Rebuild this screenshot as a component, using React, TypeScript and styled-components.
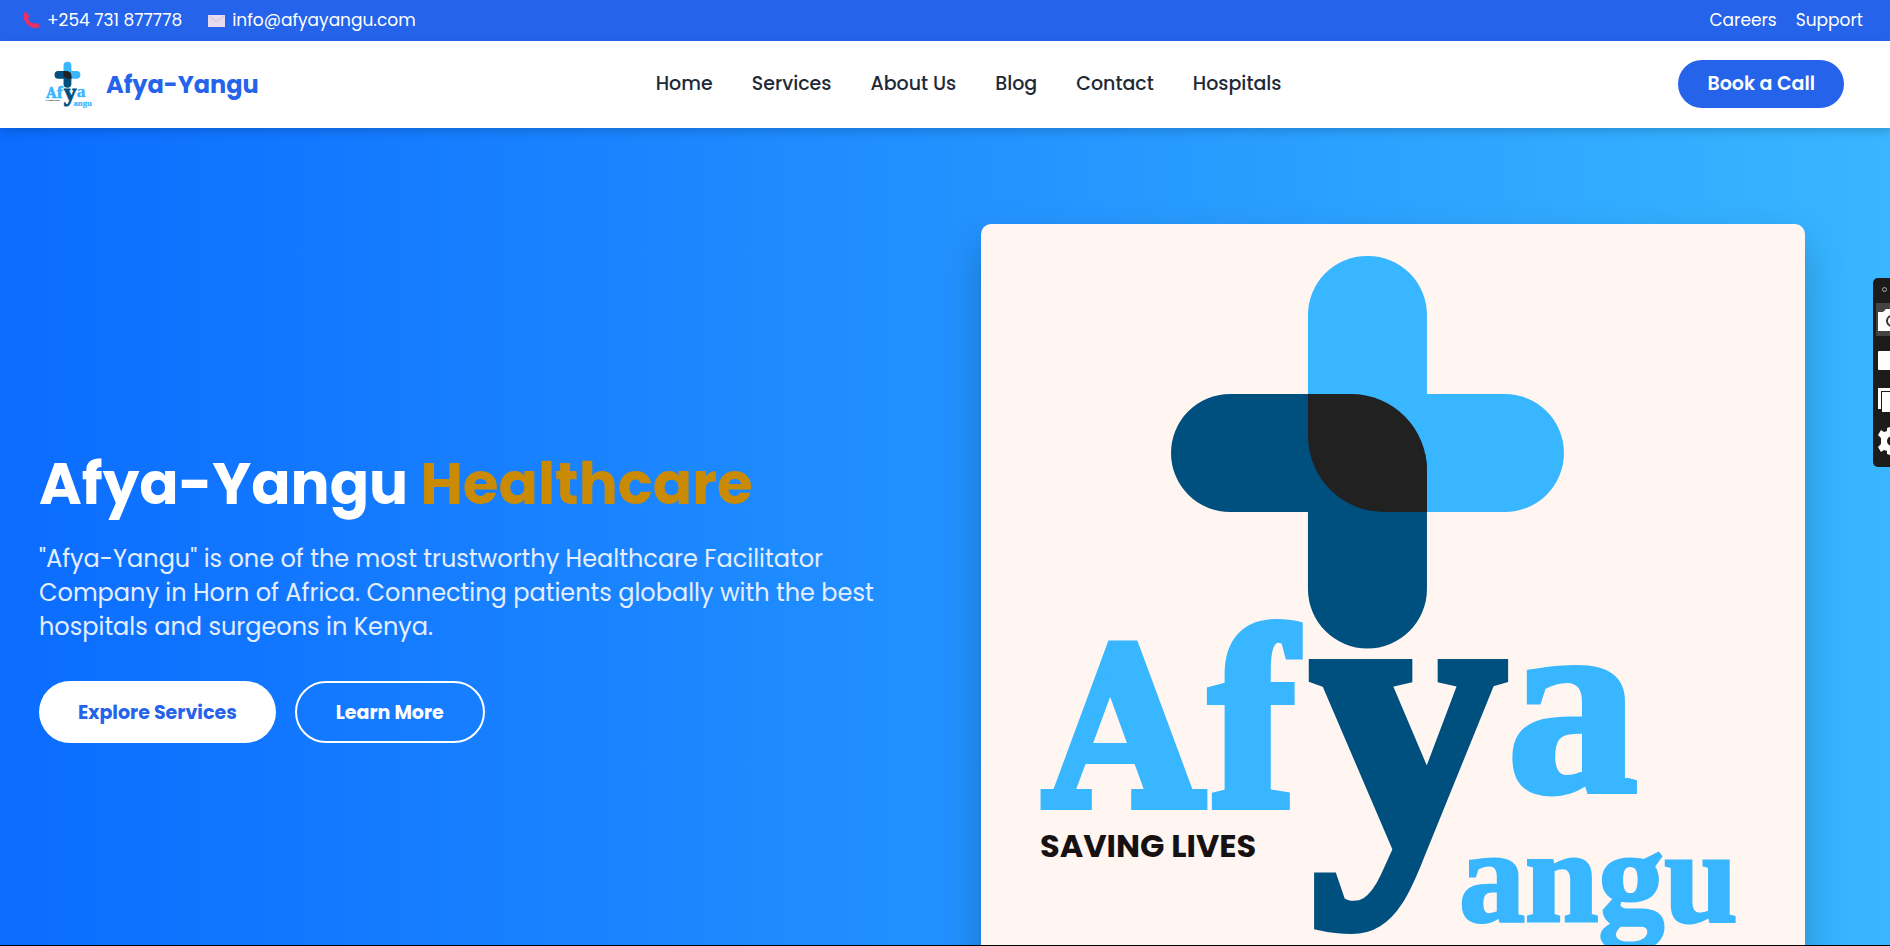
import React from "react";
import styled, { createGlobalStyle } from "styled-components";

const sans = `Poppins, Inter, "Open Sans", sans-serif`;
const slab = `"DejaVu Serif Condensed", "DejaVu Serif", serif`;
const display = `"Liberation Serif", "Times New Roman", serif`;

const GlobalStyle = createGlobalStyle`
  *, *::before, *::after { box-sizing: border-box; }
  body { margin: 0; font-family: ${sans}; color: #1f2937; }
`;

const Page = styled.div`
  height: 100vh;
  display: flex;
  flex-direction: column;
  overflow: hidden;
  border-bottom: 1px solid #000;
`;

const TopBar = styled.div`
  flex: none;
  display: flex;
  justify-content: space-between;
  padding: 8px 27px 8px 23px;
  background: #2563eb;
  font-size: 17px;
  line-height: 25px;
`;

const TopGroup = styled.div<{ $gap: number }>`
  display: flex;
  align-items: center;
  gap: ${(p) => p.$gap}px;
`;

const TopLink = styled.a`
  display: inline-flex;
  align-items: center;
  gap: 7px;
  color: #fff;
  text-decoration: none;
`;

const Header = styled.header`
  flex: none;
  position: relative;
  z-index: 1;
  display: flex;
  align-items: center;
  justify-content: space-between;
  height: 87px;
  padding: 0 46px 2px 45px;
  background: #fff;
  box-shadow: 0 4px 8px rgba(0, 0, 0, 0.15);
`;

const Brand = styled.a`
  display: flex;
  align-items: center;
  gap: 13px;
  padding-top: 2px;
  color: #2563eb;
  font-size: 24px;
  font-weight: 700;
  line-height: 36px;
  text-decoration: none;
`;

const BrandMark = styled.span`
  width: 48px;
  height: 48px;
`;

const Nav = styled.nav`
  display: flex;
  gap: 39px;
`;

const NavLink = styled.a`
  color: #1f2937;
  font-size: 19px;
  font-weight: 500;
  line-height: 28px;
  text-decoration: none;
`;

const CallButton = styled.button`
  height: 48px;
  padding: 0 29px;
  border: 0;
  border-radius: 24px;
  background: #2563eb;
  color: #fff;
  font-family: inherit;
  font-size: 19px;
  font-weight: 600;
`;

const Hero = styled.main`
  flex: 1;
  min-height: 0;
  display: grid;
  grid-template-columns: 21fr 20fr;
  gap: 77px;
  padding: 96px 85px 0 39px;
  overflow: hidden;
  background: linear-gradient(90deg, #0b6cff 0%, #38b6ff 100%);
`;

const Copy = styled.section`
  padding-top: 221px;
`;

const Title = styled.h1`
  margin: 0;
  color: #fff;
  font-size: 58px;
  font-weight: 700;
  line-height: 77px;
  white-space: nowrap;
`;

const Accent = styled.span`
  color: #ca8a04;
`;

const Lead = styled.p`
  margin: 20px 0 37px;
  color: #e4eefe;
  font-size: 24px;
  line-height: 34px;
`;

const Actions = styled.div`
  display: flex;
  gap: 19px;
`;

const ActionButton = styled.button<{ $outline?: boolean }>`
  height: 62px;
  padding: 0 39px;
  border: ${(p) => (p.$outline ? "2px solid #fff" : "0")};
  border-radius: 31px;
  background: ${(p) => (p.$outline ? "transparent" : "#fff")};
  color: ${(p) => (p.$outline ? "#fff" : "#2563eb")};
  font-family: inherit;
  font-size: 19px;
  font-weight: 700;
`;

const LogoCard = styled.figure`
  align-self: start;
  margin: 0;
  aspect-ratio: 1;
  border-radius: 10px;
  overflow: hidden;
  background: #fff6f1;
  box-shadow: 0 20px 40px rgba(0, 0, 0, 0.22);
`;

const LogoSvg = styled.svg`
  display: block;
  width: 100%;
  height: 100%;
`;

const Recorder = styled.aside`
  position: fixed;
  top: 278px;
  right: 0;
  z-index: 2;
  width: 17px;
  height: 189px;
  border-radius: 5px 0 0 5px;
  background: #1c1c1c;
  overflow: hidden;
`;

function Logo({ viewBox }: { viewBox: string }) {
  return (
    <LogoSvg viewBox={viewBox} role="img" aria-label="Afya-Yangu, saving lives">
      <g fill="#38b6ff">
        <rect x="327" y="32" width="119" height="256" rx="59" />
        <rect x="327" y="170" width="256" height="118" rx="59" />
      </g>
      <g fill="#00507f">
        <path d="M249 170H370V288H249A59 59 0 0 1 249 170Z" />
        <path d="M327 230H446V365A59 59 0 0 1 327 365Z" />
      </g>
      <path d="M370 170A76 76 0 0 1 446 246V170Z" fill="#38b6ff" />
      <path d="M327 170H370A76 76 0 0 1 446 246V288H403A76 76 0 0 1 327 212Z" fill="#212121" />
      <g fontFamily={display} fontWeight="700" fill="#38b6ff" stroke="#38b6ff">
        <text x="65" y="582" fontFamily={slab} fontSize="222" strokeWidth="8">A</text>
        <text x="229" y="581" fontSize="256" strokeWidth="10">f</text>
        <text x="526" y="567" fontSize="262" strokeWidth="6">a</text>
        <text x="478" y="697" fontSize="132" strokeWidth="3">angu</text>
      </g>
      <text x="330" y="620" fontFamily={display} fontWeight="700" fontSize="390" fill="#00507f" stroke="#00507f" strokeWidth="12">y</text>
      <text x="59" y="633" fontFamily={sans} fontWeight="700" fontSize="32" fill="#161214">SAVING LIVES</text>
    </LogoSvg>
  );
}

const PhoneIcon = () => (
  <svg width="17" height="17" viewBox="0 0 17 17" aria-hidden="true">
    <path d="M.6 1.600C1.600-.2 3.600 0 4.400 1.200L6 4C6.400 5.200 5.400 5.600 5 6.400C5.800 8.800 8 11 10.400 11.800C11.400 11.200 12.200 10.600 13.200 11L16.200 12.800C17.200 13.800 16.600 15.400 15.200 15.800C8.600 17.800-1.200 10 .6 1.600Z" fill="#ec2f62" />
  </svg>
);

const MailIcon = () => (
  <svg width="17" height="12" viewBox="0 0 17 12" aria-hidden="true">
    <rect width="17" height="12" fill="#e6daee" />
    <path d="M1 1L8.500 6.500L16 1" fill="none" stroke="#cfc2da" />
  </svg>
);

const navItems = ["Home", "Services", "About Us", "Blog", "Contact", "Hospitals"];

export default function App() {
  return (
    <Page>
      <GlobalStyle />
      <TopBar>
        <TopGroup $gap={26}>
          <TopLink href="tel:+254731877778"><PhoneIcon />+254 731 877778</TopLink>
          <TopLink href="mailto:info@afyayangu.com"><MailIcon />info@afyayangu.com</TopLink>
        </TopGroup>
        <TopGroup $gap={19}>
          <TopLink href="#careers">Careers</TopLink>
          <TopLink href="#support">Support</TopLink>
        </TopGroup>
      </TopBar>
      <Header>
        <Brand href="#home">
          <BrandMark><Logo viewBox="46 20 728 728" /></BrandMark>
          Afya-Yangu
        </Brand>
        <Nav aria-label="Main">
          {navItems.map((item) => (
            <NavLink key={item} href={"#" + item.toLowerCase().replace(" ", "-")}>{item}</NavLink>
          ))}
        </Nav>
        <CallButton type="button">Book a Call</CallButton>
      </Header>
      <Hero>
        <Copy>
          <Title>Afya-Yangu <Accent>Healthcare</Accent></Title>
          <Lead>
            "Afya-Yangu" is one of the most trustworthy Healthcare Facilitator Company in Horn of
            Africa. Connecting patients globally with the best hospitals and surgeons in Kenya.
          </Lead>
          <Actions>
            <ActionButton type="button">Explore Services</ActionButton>
            <ActionButton type="button" $outline>Learn More</ActionButton>
          </Actions>
        </Copy>
        <LogoCard><Logo viewBox="0 0 824 824" /></LogoCard>
      </Hero>
      <Recorder aria-label="Screen recorder">
        <svg width="17" height="189" viewBox="0 0 17 189" aria-hidden="true">
          <circle cx="11.500" cy="11.500" r="2" fill="none" stroke="#aaa" />
          <rect x="3" y="25" width="14" height="33" fill="#444" />
          <path d="M5 34H10L13 31H17V53H5Z" fill="#fff" />
          <circle cx="19" cy="43" r="5" fill="#fff" stroke="#333" strokeWidth="2" />
          <rect x="5" y="73" width="14" height="19" rx="1" fill="#fff" />
          <path d="M5 110H17V113H8V131H5Z" fill="#fff" />
          <rect x="9" y="114" width="10" height="20" fill="#fff" />
          <path d="M17 149L14 150V153L11 154L8 152L5 157L8 160V166L5 169L8 174L11 172L14 173V176L17 177Z" fill="#fff" />
          <circle cx="19" cy="163" r="5" fill="#1c1c1c" />
        </svg>
      </Recorder>
    </Page>
  );
}
